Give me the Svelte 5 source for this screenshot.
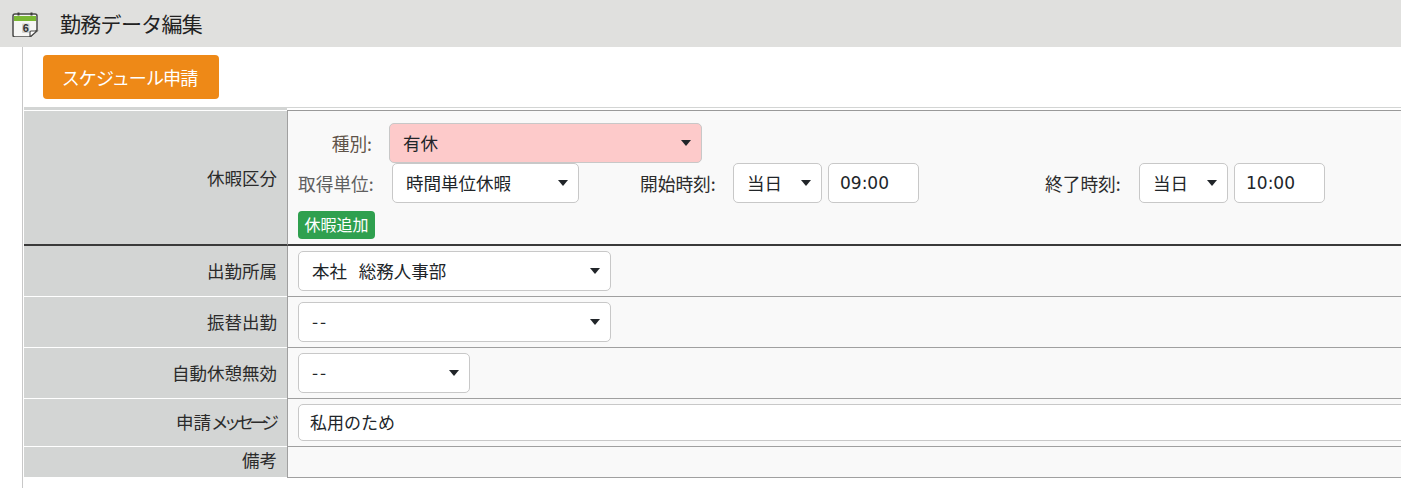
<script>
  const rows = [
    { label: '出勤所属', value: '本社   総務人事部', width: 313 },
    { label: '振替出勤', value: '--', width: 313 },
    { label: '自動休憩無効', value: '--', width: 172 }
  ];
</script>

<div class="page">
  <header class="title">
    <svg class="cal" width="28" height="28" viewBox="0 0 28 28">
      <path d="M4 5H24Q26 5 26 7V21L19 28H4Q2 28 2 26V7Q2 5 4 5Z" fill="#f6f6f4" stroke="#4a4a48" stroke-width="1.5" />
      <rect x="3" y="7" width="22" height="5" fill="#7ab833" />
      <rect x="6.5" y="3.5" width="2" height="3" fill="#3c3c3a" />
      <rect x="19.5" y="3.5" width="2" height="3" fill="#3c3c3a" />
      <rect x="11" y="14.5" width="7.5" height="9.5" rx="1" fill="#d2d2d0" />
      <path d="M19 28V23Q19 22 20 22H26Z" fill="#fff" stroke="#4a4a48" stroke-width="1.2" />
      <text x="14.7" y="23" class="cal-num">6</text>
    </svg>
    <h1>勤務データ編集</h1>
  </header>

  <div class="body">
    <div class="actions">
      <button class="apply">スケジュール申請</button>
    </div>

    <div class="form">
      <div class="row first">
        <div class="label">休暇区分</div>
        <div class="cell stack">
          <div class="line kind">
            <span class="cap kind-cap">種別:</span>
            <div class="select pink" style="width:313px">有休<i></i></div>
          </div>
          <div class="line unit">
            <span class="cap muted">取得単位:</span>
            <div class="select" style="width:187px">時間単位休暇<i></i></div>
            <span class="cap start">開始時刻:</span>
            <div class="select" style="width:89px">当日<i></i></div>
            <div class="input time">09:00</div>
            <span class="cap end">終了時刻:</span>
            <div class="select" style="width:89px">当日<i></i></div>
            <div class="input time">10:00</div>
          </div>
          <button class="add">休暇追加</button>
        </div>
      </div>

      {#each rows as r}
        <div class="row">
          <div class="label">{r.label}</div>
          <div class="cell">
            <div class="select" class:dash={r.value === '--'} style="width:{r.width}px">{r.value}<i></i></div>
          </div>
        </div>
      {/each}

      <div class="row msg">
        <div class="label">申請<span class="narrow">メッセージ</span></div>
        <div class="cell">
          <div class="input wide">私用のため</div>
        </div>
      </div>

      <div class="row note">
        <div class="label">備考</div>
        <div class="cell"></div>
      </div>
    </div>
  </div>
</div>

<style>
  :global(body) {
    margin: 0;
    background: #fff;
    overflow: hidden;
  }

  .page {
    height: 488px;
    overflow: hidden;
    font-family: "Noto Sans CJK JP", "Noto Sans", sans-serif;
    font-size: 16px;
    color: #212529;
  }

  .title {
    height: 47px;
    background: #e0e0de;
    display: flex;
    align-items: center;
    padding-left: 11px;
  }

  .cal {
    margin-right: 21px;
    margin-top: -1px;
  }

  .cal-num {
    font-family: "Liberation Sans", sans-serif;
    font-size: 11px;
    font-weight: 700;
    text-anchor: middle;
    fill: #333;
  }

  h1 {
    margin: 0;
    font-size: 21px;
    font-weight: 400;
    color: #222;
    line-height: 1;
    letter-spacing: -0.7px;
  }

  .body {
    margin-left: 22px;
    border-left: 1px solid #c8c8c8;
    height: 441px;
    box-sizing: border-box;
  }

  .actions {
    padding: 8px 0 0 20px;
    height: 60px;
    box-sizing: border-box;
  }

  .apply {
    width: 176px;
    height: 44px;
    padding: 0 3px 0 0;
    border: none;
    border-radius: 4px;
    background: #ee8917;
    color: #fff;
    font: inherit;
    font-size: 18px;
    letter-spacing: -0.9px;
  }

  .form {
    margin-left: 1px;
    border-top: 1px solid #d3d5d4;
  }

  .row {
    display: flex;
    height: 51px;
    box-sizing: border-box;
  }

  .row.first {
    height: 138px;
  }

  .row.msg {
    height: 48px;
  }

  .row.note {
    height: 31px;
  }

  .label {
    width: 263px;
    flex: none;
    box-sizing: border-box;
    background: #d3d5d4;
    border-bottom: 1px solid #fff;
    padding: 0 10px 2px 0;
    display: flex;
    align-items: center;
    justify-content: flex-end;
    font-size: 17.5px;
    color: #2b2b2b;
  }

  .narrow {
    letter-spacing: -4.8px;
    margin-right: 2.8px;
  }

  .row.note .label {
    padding-bottom: 5px;
  }

  .row.first .label {
    background: linear-gradient(#d3d5d4 2px, #fff 2px, #fff 3px, #d3d5d4 3px);
    border-bottom: 2px solid #3a3a3a;
    padding: 3px 10px 1px 0;
  }

  .cell {
    flex: 1;
    box-sizing: border-box;
    background: #f9f9f9;
    border-left: 1px solid #a0a0a0;
    border-bottom: 1px solid #a0a0a0;
    padding: 5px 0 0 10px;
  }

  .row.first .cell {
    margin-top: 2px;
    border-top: 1px solid #9a9a9a;
    border-bottom: 2px solid #3a3a3a;
    padding: 12px 0 0 10px;
  }

  .stack {
    display: flex;
    flex-direction: column;
    align-items: flex-start;
  }

  .line {
    display: flex;
    align-items: center;
    height: 40px;
  }

  .cap {
    font-size: 17.7px;
    white-space: nowrap;
    color: #2b2b2b;
  }

  .cap.kind-cap {
    width: 91px;
    padding-right: 17px;
    box-sizing: border-box;
    text-align: right;
    color: #5f5348;
  }

  .cap.muted {
    width: 94px;
    color: #5f5f5f;
  }

  .cap.start {
    margin-left: 61px;
    width: 93px;
  }

  .cap.end {
    margin-left: 126px;
    width: 94px;
  }

  .select {
    position: relative;
    box-sizing: border-box;
    height: 40px;
    display: flex;
    align-items: center;
    padding: 0 0 2px 13px;
    background: #fff;
    border: 1px solid #c8c8c8;
    border-radius: 5px;
    font-size: 17.5px;
    color: #212529;
    white-space: pre;
  }

  .select.pink {
    background: #fdcaca;
  }

  .select.dash {
    letter-spacing: 2px;
    padding-bottom: 3px;
  }

  .select i {
    position: absolute;
    right: 10px;
    top: 16px;
    width: 0;
    height: 0;
    border: 5.5px solid transparent;
    border-top: 6px solid #212529;
    border-bottom: none;
  }

  .input {
    box-sizing: border-box;
    height: 40px;
    display: flex;
    align-items: center;
    padding: 0 0 2px 11px;
    background: #fff;
    border: 1px solid #c8c8c8;
    border-radius: 5px;
    font-size: 17px;
    color: #212529;
  }

  .time {
    width: 91px;
    margin-left: 6px;
    padding: 0 0 0 11px;
    font-family: "DejaVu Sans", sans-serif;
  }

  .wide {
    width: 1200px;
    height: 37px;
    border-top-right-radius: 0;
    border-bottom-right-radius: 0;
  }

  .add {
    margin-top: 8px;
    width: 77px;
    height: 28px;
    padding: 0 0 2px;
    border: none;
    border-radius: 4px;
    background: #2fa04f;
    color: #fff;
    font: inherit;
    font-size: 16px;
  }
</style>
